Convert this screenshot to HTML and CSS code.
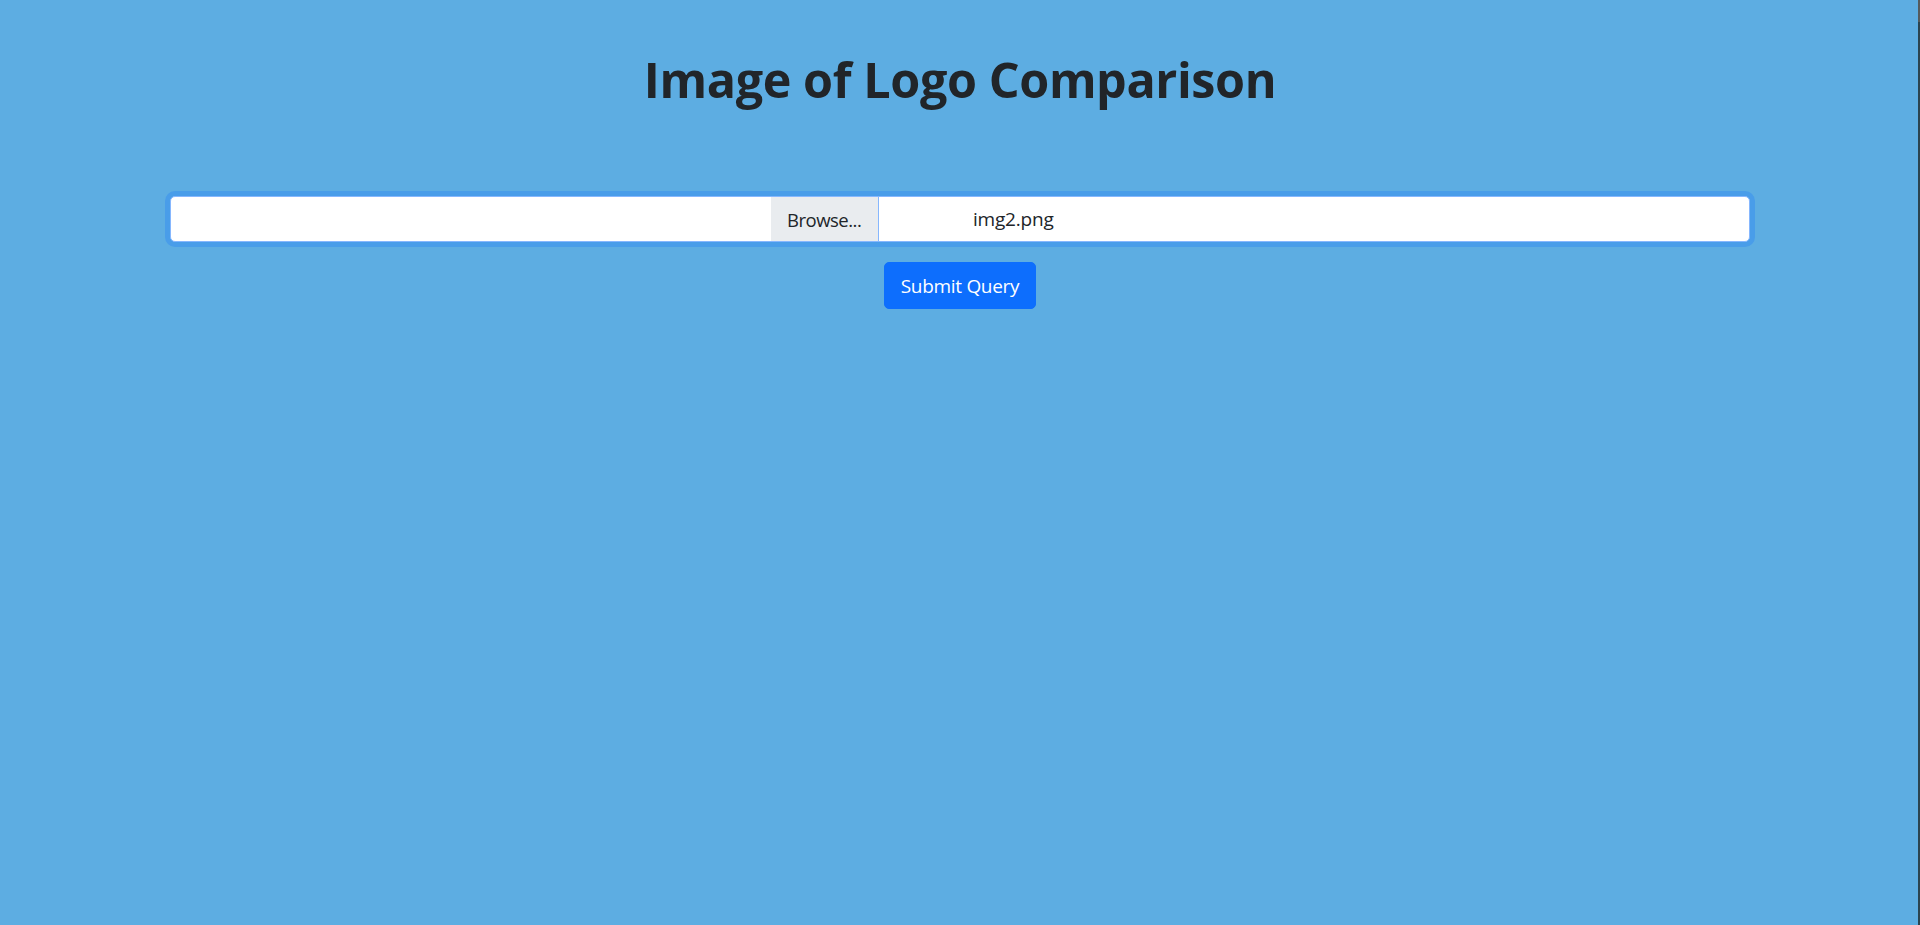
FILE: index.html
```html
<!DOCTYPE html>
<html lang="en">
<head>
<meta charset="utf-8">
<title>Image of Logo Comparison</title>
<link rel="stylesheet" href="styles.css">
</head>
<body>
  <main class="page">
    <h1 class="title">Image of Logo Comparison</h1>
    <form class="upload">
      <div class="file-input">
        <span class="file-button">Browse...</span>
        <span class="file-name">img2.png</span>
      </div>
      <button type="button" class="submit">Submit Query</button>
    </form>
  </main>
  <div class="scrollbar"><div class="scroll-thumb"></div></div>
</body>
</html>
```

FILE: styles.css
```css
html, body {
  margin: 0;
  padding: 0;
  height: 100%;
}
body {
  background: #5dade2;
  color: #212529;
  font-family: "Open Sans", "Noto Sans", Arial, sans-serif;
  font-size: 20px;
  overflow: hidden;
}
.page {
  display: flex;
  flex-direction: column;
  align-items: center;
  padding: 49px 170px 0 170px;
}
.title {
  margin: 0;
  font-size: 48.5px;
  line-height: 60px;
  font-weight: 700;
  color: #212529;
  letter-spacing: -0.4px;
}
.upload {
  margin-top: 87px;
  width: 100%;
  display: flex;
  flex-direction: column;
  align-items: center;
}
.file-input {
  box-sizing: border-box;
  width: 100%;
  height: 46px;
  background: #fff;
  border: 1px solid #86b7fe;
  border-radius: 5px;
  box-shadow: 0 0 0 5px #499de9;
  display: flex;
  align-items: stretch;
  padding-left: 600px;
  overflow: hidden;
}
.file-button {
  display: flex;
  align-items: center;
  box-sizing: border-box;
  width: 108px;
  padding-left: 16px;
  background: #e9ecef;
  border-right: 1px solid #86b7fe;
  color: #212529;
  font-size: 18.5px;
  letter-spacing: -0.5px;
}
.file-name {
  display: flex;
  align-items: center;
  margin-left: 94px;
  font-size: 19px;
  color: #212529;
  letter-spacing: -0.2px;
}
.submit {
  margin-top: 20px;
  box-sizing: border-box;
  height: 47px;
  padding: 0 16px;
  background: #0d6efd;
  border: 1px solid #0d6efd;
  border-radius: 5px;
  color: #fff;
  font-family: inherit;
  font-size: 19px;
  letter-spacing: -0.3px;
}
.scrollbar {
  position: fixed;
  top: 0;
  right: 0;
  width: 2px;
  height: 100%;
  background: #2b4450;
}
.scroll-thumb {
  height: 22px;
  background: #555b5e;
}
```
